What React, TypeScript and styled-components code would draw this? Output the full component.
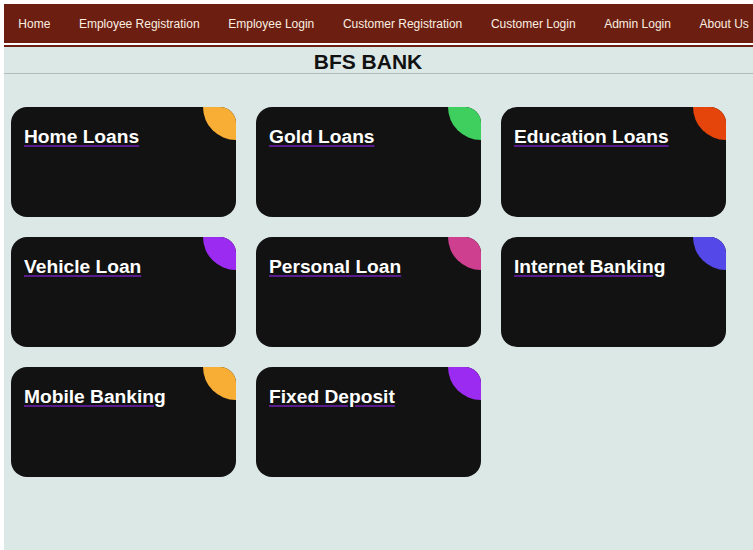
import React from 'react';
import styled, { createGlobalStyle } from 'styled-components';

const links = [
  'Home',
  'Employee Registration',
  'Employee Login',
  'Customer Registration',
  'Customer Login',
  'Admin Login',
  'About Us',
];

const services = [
  { title: 'Home Loans', accent: '#f8ae35' },
  { title: 'Gold Loans', accent: '#3fcf5e' },
  { title: 'Education Loans', accent: '#e5440b' },
  { title: 'Vehicle Loan', accent: '#9b2bf1' },
  { title: 'Personal Loan', accent: '#cf3f90' },
  { title: 'Internet Banking', accent: '#5548e8' },
  { title: 'Mobile Banking', accent: '#f8ae35' },
  { title: 'Fixed Deposit', accent: '#9b2bf1' },
];

function App() {
  return (
    <>
      <GlobalStyle />
      <Page>
        <Nav>
          {links.map((l) => (
            <NavLink key={l} href="#">
              {l}
            </NavLink>
          ))}
        </Nav>
        <Main>
          <Title>BFS BANK</Title>
          <Grid>
            {services.map((s) => (
              <Card key={s.title} $accent={s.accent}>
                <CardLink href="#">{s.title}</CardLink>
              </Card>
            ))}
          </Grid>
        </Main>
      </Page>
    </>
  );
}

const GlobalStyle = createGlobalStyle`
  html, body, #root {
    height: 100%;
  }
  body {
    margin: 0;
    padding: 4px 0 0 4px;
    box-sizing: border-box;
    background: #ffffff;
    font-family: "Liberation Sans", Arial, sans-serif;
  }
`;

const Page = styled.div`
  display: flex;
  flex-direction: column;
  height: 100%;
`;

const Nav = styled.nav`
  display: flex;
  align-items: center;
  height: 39px;
  padding-top: 1px;
  box-sizing: border-box;
  background: #6c1f11;
  margin-bottom: 2px;
`;

const NavLink = styled.a`
  padding: 0 14.3px;
  color: #fbeee0;
  font-size: 12px;
  text-decoration: none;
  white-space: nowrap;
`;

const Main = styled.main`
  flex: 1;
  background: #dce8e6;
  border-top: 2px solid #6c1f11;
`;

const Title = styled.h1`
  margin: 0;
  padding-right: 21px;
  height: 26px;
  line-height: 29px;
  font-size: 21px;
  font-weight: bold;
  text-align: center;
  color: #111111;
  border-bottom: 1px solid #b3bbb9;
`;

const Grid = styled.section`
  display: grid;
  grid-template-columns: repeat(3, 225px);
  gap: 20px;
  padding: 33px 0 0 7px;
`;

const Card = styled.div<{ $accent: string }>`
  position: relative;
  height: 110px;
  padding: 19px 13px;
  box-sizing: border-box;
  background: #121212;
  border-radius: 16px;
  overflow: hidden;

  &::before {
    content: '';
    position: absolute;
    top: 0;
    right: 0;
    width: 33px;
    height: 33px;
    background: ${(p) => p.$accent};
    border-bottom-left-radius: 100%;
  }
`;

const CardLink = styled.a`
  font-size: 19.2px;
  font-weight: bold;
  color: #ffffff;
  text-decoration: underline;
  text-decoration-color: #5a1b8f;
  text-decoration-thickness: 2px;
  text-underline-offset: 2px;
`;

export default App;
